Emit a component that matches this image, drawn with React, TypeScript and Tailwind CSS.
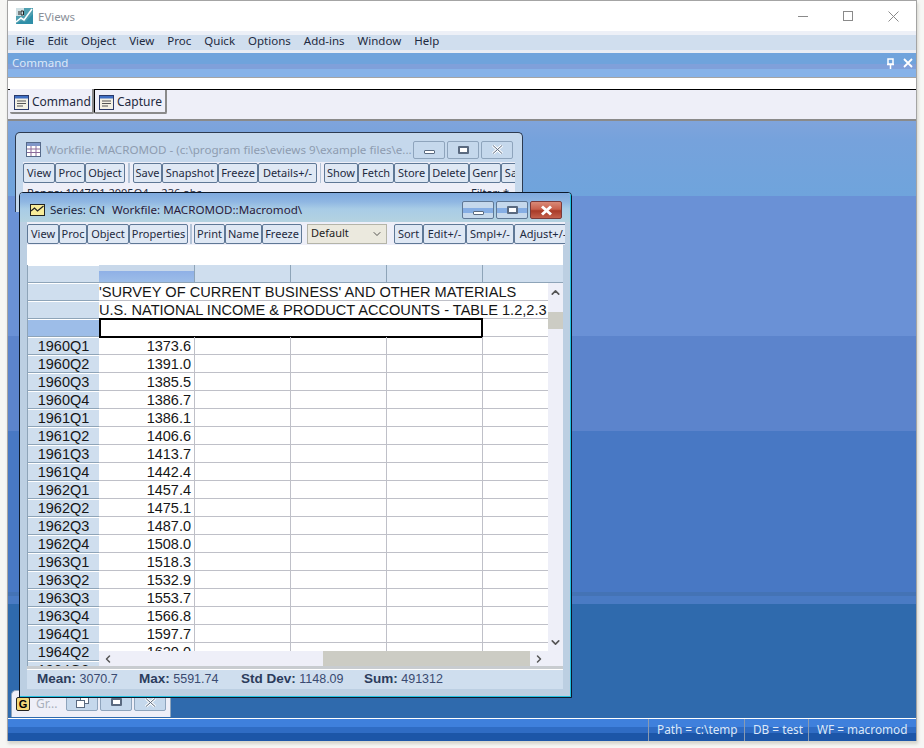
import React from "react";
import { ChevronUp, ChevronDown, ChevronLeft, ChevronRight } from "lucide-react";

const menus = ["File", "Edit", "Object", "View", "Proc", "Quick", "Options", "Add-ins", "Window", "Help"];

const workfileButtons = [
  [
    { label: "View", w: "w-[32px]" },
    { label: "Proc", w: "w-[30px]" },
    { label: "Object", w: "w-[40px]" },
  ],
  [
    { label: "Save", w: "w-[29px]" },
    { label: "Snapshot", w: "w-[56px]" },
    { label: "Freeze", w: "w-[40px]" },
    { label: "Details+/-", w: "w-[59px]" },
  ],
  [
    { label: "Show", w: "w-[34px]" },
    { label: "Fetch", w: "w-[36px]" },
    { label: "Store", w: "w-[35px]" },
    { label: "Delete", w: "w-[40px]" },
    { label: "Genr", w: "w-[32px]" },
    { label: "Sample", w: "w-[46px]" },
  ],
];

const seriesLeft = [
  [
    { label: "View", w: "w-[32px]" },
    { label: "Proc", w: "w-[28px]" },
    { label: "Object", w: "w-[42px]" },
    { label: "Properties", w: "w-[59px]" },
  ],
  [
    { label: "Print", w: "w-[31px]" },
    { label: "Name", w: "w-[37px]" },
    { label: "Freeze", w: "w-[40px]" },
  ],
];

const seriesRight = [
  { label: "Sort", w: "w-[29px]" },
  { label: "Edit+/-", w: "w-[43px]" },
  { label: "Smpl+/-", w: "w-[48px]" },
  { label: "Adjust+/-", w: "w-[58px]" },
];

const rows = [
  ["1960Q1", "1373.6"],
  ["1960Q2", "1391.0"],
  ["1960Q3", "1385.5"],
  ["1960Q4", "1386.7"],
  ["1961Q1", "1386.1"],
  ["1961Q2", "1406.6"],
  ["1961Q3", "1413.7"],
  ["1961Q4", "1442.4"],
  ["1962Q1", "1457.4"],
  ["1962Q2", "1475.1"],
  ["1962Q3", "1487.0"],
  ["1962Q4", "1508.0"],
  ["1963Q1", "1518.3"],
  ["1963Q2", "1532.9"],
  ["1963Q3", "1553.7"],
  ["1963Q4", "1566.8"],
  ["1964Q1", "1597.7"],
  ["1964Q2", "1620.0"],
];

const DocIcon = () => (
  <svg width="15" height="15" viewBox="0 0 15 15" className="shrink-0">
    <rect x="0.5" y="0.5" width="14" height="14" fill="#f4f1e4" stroke="#2a3a6a" />
    <rect x="1" y="1" width="13" height="2.5" fill="#3f6fc4" />
    <path d="M3 6h9M3 8.5h9M3 11h6" stroke="#555" strokeWidth="1" />
  </svg>
);

const GridIcon = () => (
  <svg width="15" height="15" viewBox="0 0 15 15" className="shrink-0">
    <rect x="0.5" y="0.5" width="14" height="14" fill="#fff" stroke="#566a8a" />
    <rect x="1" y="1" width="13" height="3" fill="#7f96c8" />
    <path d="M5 4v10M10 4v10M1 7h13M1 10.5h13" stroke="#8a6a9a" strokeWidth="1" />
  </svg>
);

const SeriesIcon = () => (
  <svg width="15" height="12" viewBox="0 0 15 12" className="shrink-0">
    <rect x="0.5" y="0.5" width="14" height="11" fill="#f8ec9a" stroke="#222" />
    <path d="M1 7l3.5-3 3 3 6-5" fill="none" stroke="#222" strokeWidth="1.2" />
  </svg>
);

const Logo = () => (
  <svg width="17" height="16" viewBox="0 0 17 16" className="shrink-0">
    <rect width="17" height="16" fill="#4f9fb0" />
    <rect width="8" height="8" fill="#cfe0e4" />
    <path d="M0 14l5-4 3 2 8-11" fill="none" stroke="#fff" strokeWidth="1.6" />
    <path d="M0 16l5-3 4 1 8-8v10z" fill="#2f8fa8" />
    <path d="M3 7V3M5 3h2.5v4H5z" fill="none" stroke="#222" strokeWidth="1" />
  </svg>
);

function ToolBtn({ label, w }: { label: string; w: string }) {
  return (
    <div className={`${w} h-[20px] shrink-0 overflow-hidden whitespace-nowrap rounded-[2px] border border-[#5f7896] bg-[#dfe8f4] text-center font-['Noto_Sans',sans-serif] text-[11px] leading-[18px] text-[#1e2a40]`}>
      {label}
    </div>
  );
}

function WinBtn({ kind, tone }: { kind: "min" | "max" | "close" | "restore"; tone: "faded" | "blue" | "red" }) {
  const box =
    tone === "red"
      ? "border-[#7a3a3a] bg-[linear-gradient(#d98a78_0%,#c9604c_45%,#a83a28_55%,#c4604c_100%)]"
      : tone === "blue"
        ? "border-[#5f7896] bg-[linear-gradient(#c5d8ec_0%,#c5d8ec_38%,#86aee4_38%,#86aee4_68%,#c5d8ec_68%)]"
        : "border-[#8ea4bc] bg-[#c5d8ec]";
  return (
    <div className={`flex h-[18px] w-[32px] items-center justify-center rounded-[2px] border ${box}`}>
      {kind === "min" && <div className="mt-[5px] h-[4px] w-[11px] rounded-[1px] border border-[#5a6a80] bg-white" />}
      {kind === "max" && <div className="h-[8px] w-[11px] rounded-[1px] border-2 border-[#5a6a80] bg-white" />}
      {kind === "close" && (
        <svg width="13" height="11" viewBox="0 0 13 11">
          <path d="M2 1.5l9 8M11 1.5l-9 8" stroke="#fff" strokeWidth="3" />
          {tone !== "red" && <path d="M2 1.5l9 8M11 1.5l-9 8" stroke="#5a6a80" strokeWidth="1" />}
        </svg>
      )}
      {kind === "restore" && (
        <svg width="13" height="12" viewBox="0 0 13 12">
          <rect x="4.5" y="0.5" width="8" height="7" fill="#fff" stroke="#5a6a80" />
          <rect x="0.5" y="4.5" width="8" height="7" fill="#fff" stroke="#5a6a80" />
        </svg>
      )}
    </div>
  );
}

function RowHead({ label, selected }: { label?: string; selected?: boolean }) {
  return (
    <div className={`h-[18px] shrink-0 border-b border-t border-b-[#8ea4b8] border-t-white text-center font-['Liberation_Sans',sans-serif] text-[14.5px] leading-[17px] text-[#161616] ${selected ? "bg-[#9dbde8]" : "bg-[#cfdeee]"}`}>
      {label}
    </div>
  );
}

function DataRow({ value }: { value: string }) {
  return (
    <div className="flex h-[18px] shrink-0 border-b border-[#bfc0c8] bg-white">
      <div className="w-[96px] border-r border-[#bfc0c8] pr-[3px] text-right font-['Liberation_Sans',sans-serif] text-[14.5px] leading-[18px] text-[#161616]">
        {value}
      </div>
      <div className="w-[96px] border-r border-[#bfc0c8]" />
      <div className="w-[96px] border-r border-[#bfc0c8]" />
      <div className="w-[96px] border-r border-[#bfc0c8]" />
    </div>
  );
}

function TextRow({ text }: { text: string }) {
  return (
    <div className="h-[18px] shrink-0 whitespace-nowrap border-b border-[#bfc0c8] bg-white font-['Liberation_Sans',sans-serif] text-[14.6px] leading-[19px] text-[#161616]">
      {text}
    </div>
  );
}

function Stat({ name, value, w }: { name: string; value: string; w: string }) {
  return (
    <div className={`${w} shrink-0 whitespace-nowrap font-['Liberation_Sans',sans-serif] text-[12.5px] text-[#3a4a70]`}>
      <span className="text-[13.5px] font-bold text-[#2c3c5c]">{name}</span> {value}
    </div>
  );
}

function SeriesWindow() {
  return (
    <div className="absolute left-[11px] top-[71px] z-20 h-[506px] w-[553px] rounded-t-[4px] border border-[#0c1a2c]">
      <div className="flex h-full flex-col rounded-t-[3px] border-b border-r border-b-[#22c0e0] border-r-[#22c0e0] bg-[#bccfe2] px-[7px]">
        <div className="-mx-[7px] flex h-[29px] shrink-0 items-center rounded-t-[3px] bg-[linear-gradient(#7fa9de_0%,#8fb6e2_30%,#a8cce6_55%,#b4d2e0_100%)] pl-[10px] pr-[8px] pt-[5px]">
          <SeriesIcon />
          <span className="ml-[5px] w-[62px] whitespace-nowrap font-['Noto_Sans',sans-serif] text-[11.6px] text-[#20263e]">Series: CN</span>
          <span className="whitespace-nowrap font-['Noto_Sans',sans-serif] text-[11.6px] text-[#2a1a3a]">Workfile: MACROMOD::Macromod\</span>
          <div className="ml-auto flex gap-[2px]">
            <WinBtn kind="min" tone="blue" />
            <WinBtn kind="max" tone="blue" />
            <WinBtn kind="close" tone="red" />
          </div>
        </div>
        <div className="-mr-[2px] flex h-[23px] shrink-0 items-center overflow-hidden bg-[#eeeff8]">
          {seriesLeft[0].map((b) => (
            <ToolBtn key={b.label} {...b} />
          ))}
          <div className="ml-[2px] mr-[1px] h-[20px] w-[2px] shrink-0 bg-[#b4c4d8]" />
          <div className="w-[1px] shrink-0" />
          {seriesLeft[1].map((b) => (
            <ToolBtn key={b.label} {...b} />
          ))}
          <div className="ml-[5px] flex h-[20px] w-[80px] shrink-0 items-center justify-between border border-[#b4b4a8] bg-[#ebe9de] pl-[3px] pr-[3px] font-['Noto_Sans',sans-serif] text-[11px] text-[#222]">
            Default
            <ChevronDown size={12} strokeWidth={1.5} />
          </div>
          <div className="w-[7px] shrink-0" />
          {seriesRight.map((b) => (
            <ToolBtn key={b.label} {...b} />
          ))}
        </div>
        <div className="h-[20px] shrink-0 bg-white" />
        <div className="flex h-[401px] shrink-0">
          <div className="h-[401px] w-[72px] shrink-0 overflow-hidden border-l border-[#8ea4b8]">
            <RowHead />
            <RowHead />
            <RowHead />
            <RowHead selected />
            {rows.map((r) => (
              <RowHead key={r[0]} label={r[0]} />
            ))}
            <RowHead label="1964Q3" />
          </div>
          <div className="flex h-[401px] min-w-0 flex-1 flex-col">
            <div className="flex h-[18px] shrink-0 border-b border-[#8ea4b8] bg-[#cfdeee]">
              <div className="w-[96px] border-r border-[#8ea4b8] bg-[linear-gradient(#c8d8ea_0%,#c8d8ea_35%,#8fb0e6_35%,#9dbde8_100%)]" />
              <div className="w-[96px] border-r border-[#8ea4b8]" />
              <div className="w-[96px] border-r border-[#8ea4b8]" />
              <div className="w-[96px] border-r border-[#8ea4b8]" />
            </div>
            <div className="flex min-h-0 flex-1">
              <div className="min-w-0 flex-1 overflow-hidden">
                <TextRow text="'SURVEY OF CURRENT BUSINESS' AND OTHER MATERIALS" />
                <TextRow text="U.S. NATIONAL INCOME & PRODUCT ACCOUNTS - TABLE 1.2,2.3" />
                <div className="flex h-[18px] shrink-0 border-b border-[#bfc0c8] bg-white">
                  <div className="-mt-[1px] h-[20px] w-[384px] border-2 border-black" />
                </div>
                {rows.map((r) => (
                  <DataRow key={r[0]} value={r[1]} />
                ))}
              </div>
              <div className="flex w-[15px] shrink-0 flex-col items-center bg-[#eeeff8]">
                <ChevronUp size={13} strokeWidth={3} className="mt-[3px] text-[#555]" />
                <div className="mt-[13px] h-[17px] w-full bg-[#ccccc4]" />
                <ChevronDown size={13} strokeWidth={3} className="mb-[2px] mt-auto text-[#555]" />
              </div>
            </div>
            <div className="flex h-[15px] shrink-0 items-center bg-[#eeeff8] pl-[3px]">
              <ChevronLeft size={12} strokeWidth={3} className="text-[#555]" />
              <div className="ml-[209px] h-full w-[207px] bg-[#ccccc4]" />
              <ChevronRight size={12} strokeWidth={3} className="ml-[3px] text-[#555]" />
            </div>
          </div>
        </div>
        <div className="h-[3px] shrink-0 bg-[#c8ccd0]" />
        <div className="flex h-[20px] shrink-0 items-center border-t border-white bg-[#cfdeee] pl-[10px]">
          <Stat name="Mean:" value="3070.7" w="w-[102px]" />
          <Stat name="Max:" value="5591.74" w="w-[102px]" />
          <Stat name="Std Dev:" value="1148.09" w="w-[123px]" />
          <Stat name="Sum:" value="491312" w="w-[100px]" />
        </div>
      </div>
    </div>
  );
}

function WorkfileWindow() {
  return (
    <div className="absolute left-[7px] top-[11px] z-10 h-[80px] w-[508px] overflow-hidden rounded-t-[5px] border border-b-0 border-[#2c3a50] bg-[#c5d8ec] px-[7px]">
      <div className="flex h-[29px] items-center pt-[4px]">
        <div className="ml-[3px]">
          <GridIcon />
        </div>
        <span className="ml-[5px] w-[367px] whitespace-nowrap font-['Noto_Sans',sans-serif] text-[11.6px] text-[#8e9cb0]">
          Workfile: MACROMOD - (c:\program files\eviews 9\example files\e...
        </span>
        <div className="flex gap-[2px]">
          <WinBtn kind="min" tone="faded" />
          <WinBtn kind="max" tone="faded" />
          <WinBtn kind="close" tone="faded" />
        </div>
      </div>
      <div className="flex h-[21px] items-center overflow-hidden bg-[#eeeff8]">
        {workfileButtons[0].map((b) => (
          <ToolBtn key={b.label} {...b} />
        ))}
        <div className="mx-[3px] h-[20px] w-[2px] shrink-0 bg-[#b4c4d8]" />
        {workfileButtons[1].map((b) => (
          <ToolBtn key={b.label} {...b} />
        ))}
        <div className="mx-[3px] h-[20px] w-[1px] shrink-0 bg-[#b4c4d8]" />
        {workfileButtons[2].map((b) => (
          <ToolBtn key={b.label} {...b} />
        ))}
      </div>
      <div className="flex h-[24px] justify-between bg-[#eeeff8] pl-[4px] pr-[6px] pt-[2px] font-['Noto_Sans',sans-serif] text-[11px] leading-[16px] text-[#1e2a40]">
        <span>Range: 1947Q1 2005Q4 -- 236 obs</span>
        <span>Filter: *</span>
      </div>
    </div>
  );
}

function MiniWindow() {
  return (
    <div className="absolute left-[3px] top-[569px] z-10 flex h-[27px] w-[160px] items-end rounded-tl-[5px] border border-b-0 border-[#8ea4bc] bg-[#eeeff8] pb-[6px] pl-[4px]">
      <div className="flex h-[14px] w-[14px] items-center justify-center rounded-[2px] border border-[#222] bg-[#f4d878] font-['Liberation_Sans',sans-serif] text-[11px] font-bold leading-none">
        G
      </div>
      <span className="ml-[6px] w-[30px] font-['Noto_Sans',sans-serif] text-[12px] leading-[14px] text-[#a8b0bc]">Gr...</span>
      <div className="flex gap-[2px]">
        <WinBtn kind="restore" tone="faded" />
        <WinBtn kind="max" tone="faded" />
        <WinBtn kind="close" tone="faded" />
      </div>
    </div>
  );
}

export default function App() {
  return (
    <div className="h-[748px] w-[924px] overflow-hidden bg-[#f6f6f4] pl-[7px] font-['Noto_Sans',sans-serif]">
      <div className="flex h-[741px] w-[910px] flex-col border-l border-r border-t border-[#a4a4a4] bg-white shadow-[1px_3px_3px_#d4d4cc]">
        <div className="flex h-[30px] shrink-0 items-center pl-[8px]">
          <Logo />
          <span className="ml-[5px] pt-[1px] text-[11.5px] text-[#8a8f98]">EViews</span>
          <div className="ml-auto flex items-center gap-[35px] pr-[17px]">
            <div className="h-px w-[10px] bg-[#8a8a8a]" />
            <div className="h-[10px] w-[10px] border border-[#8a8a8a]" />
            <svg width="11" height="11" viewBox="0 0 11 11">
              <path d="M0.5 0.5l10 10M10.5 0.5l-10 10" stroke="#8a8a8a" strokeWidth="1" />
            </svg>
          </div>
        </div>
        <div className="h-[4px] shrink-0 bg-[#edf0f7]" />
        <div className="flex h-[15px] shrink-0 items-center gap-[13px] bg-[#d0deee] pb-[3px] pl-[8px] text-[11.5px] text-[#1e2a40]">
          {menus.map((m) => (
            <span key={m}>{m}</span>
          ))}
        </div>
        <div className="h-[3px] shrink-0 bg-[#e8ecf4]" />
        <div className="flex h-[25px] shrink-0 items-center justify-between border-b border-[#a4a4a4] bg-[linear-gradient(#6fa3dc_0%,#6fa3dc_45%,#80a0da_45%,#80a0da_68%,#86b2e8_68%)] pb-[4px] pl-[4px] pr-[3px]">
          <span className="text-[11.5px] text-[#dce8f8]">Command</span>
          <div className="flex items-center gap-[8px]">
            <svg width="9" height="11" viewBox="0 0 9 11">
              <path d="M2 1h5v5H2zM1 6.5h7M4.5 7v4" fill="none" stroke="#fff" strokeWidth="1.5" />
            </svg>
            <svg width="10" height="10" viewBox="0 0 10 10">
              <path d="M1 1l8 8M9 1l-8 8" stroke="#fff" strokeWidth="1.8" />
            </svg>
          </div>
        </div>
        <div className="h-[11px] shrink-0 bg-white" />
        <div className="flex h-[32px] shrink-0 items-start border-b-2 border-t border-b-[#8a8a8a] border-t-black bg-[#eeeff8] pl-[2px]">
          <div className="-mt-px flex h-[25px] w-[84px] items-center gap-[3px] rounded-b-[2px] border-b-2 border-r-2 border-[#8a8a8a] bg-[#eeeff8] pl-[4px] pt-[3px] text-[12px] text-[#1e2a40]">
            <DocIcon />
            Command
          </div>
          <div className="flex h-[24px] w-[73px] items-center gap-[3px] rounded-b-[2px] border-b-2 border-l border-r-2 border-b-[#8a8a8a] border-l-black border-r-[#8a8a8a] bg-[#eeeff8] pl-[4px] pt-[2px] text-[12px] text-[#1e2a40]">
            <DocIcon />
            Capture
          </div>
        </div>
        <div className="relative flex min-h-0 flex-1 flex-col">
          <div className="h-[75px] shrink-0 bg-[linear-gradient(#7fa4dc_0%,#76a2dc_25%,#6fa4dc_100%)]" />
          <div className="h-[140px] shrink-0 bg-[#6a91d6]" />
          <div className="h-[95px] shrink-0 bg-[#5c84cc]" />
          <div className="h-[161px] shrink-0 bg-[#4878c4]" />
          <div className="h-[4px] shrink-0 bg-[#4473b5]" />
          <div className="h-[8px] shrink-0 bg-[#4a7bc4]" />
          <div className="flex-1 bg-[#2f6aad]" />
          <WorkfileWindow />
          <MiniWindow />
          <SeriesWindow />
        </div>
        <div className="h-[1px] shrink-0 bg-white" />
        <div className="flex h-[22px] shrink-0 justify-end bg-[linear-gradient(#3f80dc_0%,#3f80dc_35%,#2f6cc4_35%,#2f6cc4_65%,#1c56a8_65%)] pr-[1px] text-[11.8px] leading-[20px] text-[#dce8f8]">
          <div className="w-[96px] border-l border-[#8a9ab0] pl-[8px]">Path = c:\temp</div>
          <div className="w-[64px] border-l border-[#8a9ab0] pl-[8px]">DB = test</div>
          <div className="w-[107px] border-l border-[#8a9ab0] pl-[8px]">WF = macromod</div>
        </div>
      </div>
    </div>
  );
}
